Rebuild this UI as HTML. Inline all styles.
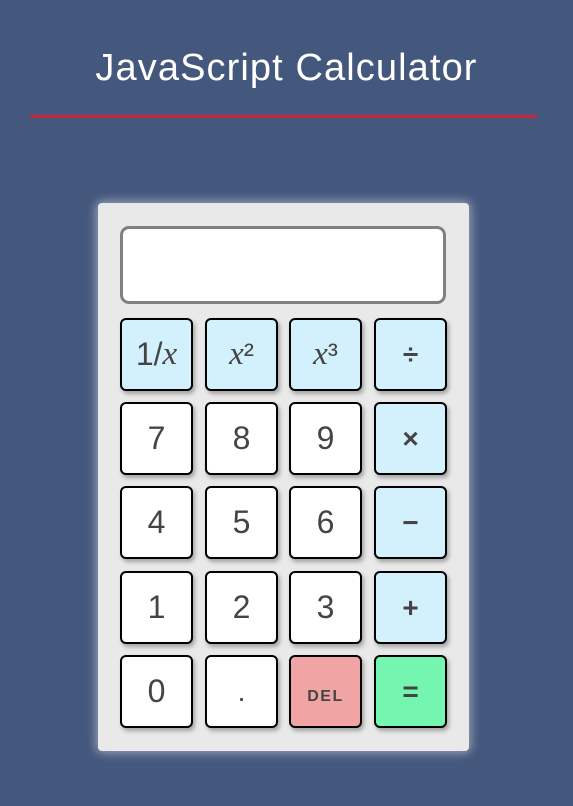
<!DOCTYPE html>
<html><head><style>
html,body{margin:0;padding:0;}
body{width:573px;height:806px;background:#44577c;position:relative;overflow:hidden;font-family:"Liberation Sans",sans-serif;}
h1{position:absolute;top:47px;left:0;width:573px;text-align:center;margin:0;font-weight:normal;font-size:38px;color:#fff;letter-spacing:1.1px;}
.line{position:absolute;left:30px;top:115px;width:507px;height:3px;background:#c5273f;}
.calc{position:absolute;left:98px;top:203px;width:371px;height:548px;background:#e9e9e9;border-radius:4px;box-shadow:0 0 10px 2px rgba(255,255,255,0.45);}
.disp{position:absolute;left:22px;top:23px;width:320px;height:72px;background:#fff;border:3px solid #808080;border-radius:9px;}
.b{position:absolute;width:69px;height:69px;border:2px solid #000;border-radius:6px;background:#fff;box-shadow:2px 3px 4px rgba(0,0,0,0.3);display:flex;align-items:center;justify-content:center;font-size:32px;color:#444;box-sizing:content-box;}
.op{background:#d3f0fd;}
.o{font-size:28px;font-weight:bold;color:#444;}
.i{font-family:"Liberation Serif",serif;font-style:italic;font-size:33px;}
.s{font-size:30px;}
</style></head><body>
<h1>JavaScript Calculator</h1>
<div class="line"></div>
<div class="calc">
<div class="disp"></div>
<div class="b op" style="left:22px;top:115px">1/<span class="i">x</span></div>
<div class="b op" style="left:107px;top:115px"><span class="i">x</span><span class="s">²</span></div>
<div class="b op" style="left:191px;top:115px"><span class="i">x</span><span class="s">³</span></div>
<div class="b op o" style="left:276px;top:115px">÷</div>
<div class="b" style="left:22px;top:199px">7</div>
<div class="b" style="left:107px;top:199px">8</div>
<div class="b" style="left:191px;top:199px">9</div>
<div class="b op o" style="left:276px;top:199px">×</div>
<div class="b" style="left:22px;top:283px">4</div>
<div class="b" style="left:107px;top:283px">5</div>
<div class="b" style="left:191px;top:283px">6</div>
<div class="b op o" style="left:276px;top:283px">−</div>
<div class="b" style="left:22px;top:368px">1</div>
<div class="b" style="left:107px;top:368px">2</div>
<div class="b" style="left:191px;top:368px">3</div>
<div class="b op o" style="left:276px;top:368px">+</div>
<div class="b" style="left:22px;top:452px">0</div>
<div class="b" style="left:107px;top:452px;font-size:28px">.</div>
<div class="b" style="left:191px;top:452px;background:#f1a4a4;font-size:16px;font-weight:bold;letter-spacing:1.5px;"><span style="margin-top:10px">DEL</span></div>
<div class="b" style="left:276px;top:452px;background:#74f5b0;font-size:28px;font-weight:bold">=</div>
</div>
</body></html>
